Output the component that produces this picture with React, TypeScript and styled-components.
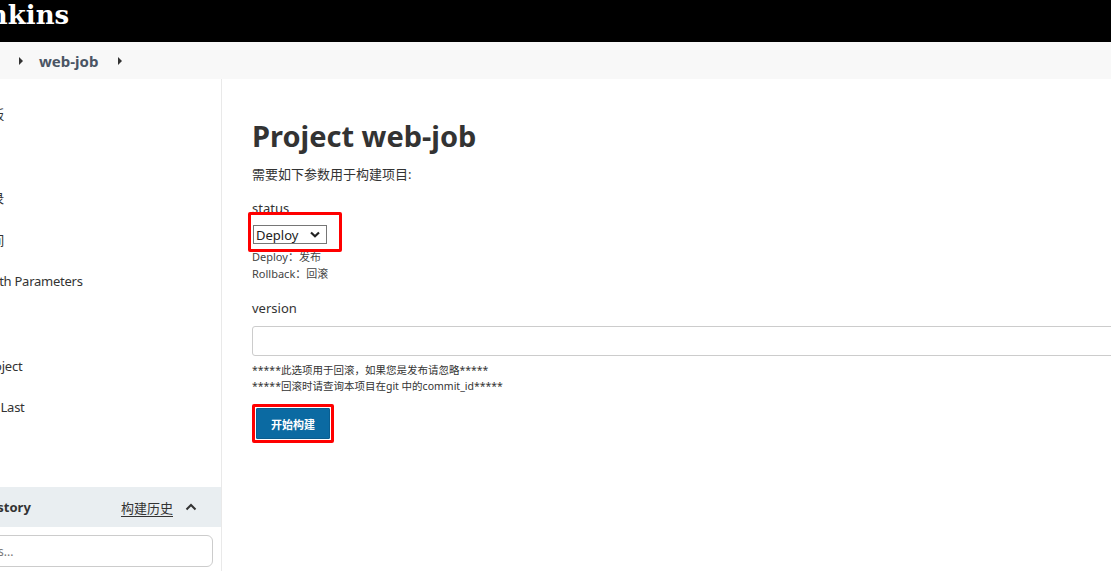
import React from "react";
import styled, { createGlobalStyle } from "styled-components";

const Global = createGlobalStyle`
  html, body { margin: 0; padding: 0; overflow: hidden; background: #fff; }
  body { font-family: "Noto Sans", "Noto Sans CJK SC", sans-serif; color: #333; }
  * { box-sizing: border-box; }
`;

const Viewport = styled.div`
  width: 1111px;
  height: 571px;
  overflow: hidden;
`;

const Page = styled.div`
  width: 1411px;
  margin-left: -100px;
  display: flex;
  flex-direction: column;
  height: 571px;
`;

const Header = styled.header`
  height: 42px;
  background: #000;
  display: flex;
  align-items: center;
  padding-left: 60px;
`;

const Logo = styled.span`
  font-family: "DejaVu Serif", "Liberation Serif", serif;
  font-weight: 700;
  font-size: 26px;
  color: #fff;
  line-height: 42px;
  margin-top: -13px;
`;

const Breadcrumbs = styled.nav`
  height: 37px;
  background: #f8f8f8;
  display: flex;
  align-items: center;
  padding-left: 18px;
`;

const Crumb = styled.a`
  font-size: 15px;
  font-weight: 700;
  color: #4a5564;
  text-decoration: none;
  margin-right: 16px;
`;

const Caret = styled.span`
  width: 12px;
  height: 12px;
  margin-right: 12px;
  display: flex;
  align-items: center;
  justify-content: center;
  &::before {
    content: "";
    border-top: 4px solid transparent;
    border-bottom: 4px solid transparent;
    border-left: 4px solid #333;
  }
`;

const Body = styled.div`
  flex: 1;
  display: flex;
  min-height: 0;
`;

const Sidebar = styled.aside`
  width: 322px;
  flex: none;
  border-right: 1px solid #e9e9e9;
  padding-top: 13px;
  display: flex;
  flex-direction: column;
`;

const TaskList = styled.ul`
  list-style: none;
  margin: 0;
  padding: 0;
`;

const Task = styled.li`
  height: 42px;
  display: flex;
  align-items: center;
  padding-left: 53px;
  font-size: 13px;
  letter-spacing: -0.25px;
  color: #333;
  white-space: nowrap;
`;

const HistoryPanel = styled.section`
  margin-top: 17px;
`;

const HistoryHeader = styled.div`
  height: 40px;
  background: #e9eef1;
  display: flex;
  align-items: center;
  justify-content: space-between;
  padding-left: 47px;
  padding-right: 24px;
`;

const HistoryTitle = styled.span`
  font-size: 13px;
  font-weight: 700;
  color: #333;
`;

const HistoryTools = styled.div`
  display: flex;
  align-items: center;
  gap: 12px;
`;

const HistoryLink = styled.a`
  font-size: 13px;
  color: #333;
  text-decoration: underline;
  text-underline-offset: 3px;
`;

const FilterBox = styled.div`
  padding: 8px 8px 0 20px;
`;

const FilterInput = styled.input`
  width: 100%;
  height: 32px;
  border: 1px solid #ccc;
  border-radius: 6px;
  padding: 0 17px;
  font-family: "Noto Sans", sans-serif;
  font-size: 12px;
  &::placeholder { color: #777; }
`;

const Main = styled.main`
  flex: 1;
  padding: 40px 0 0 30px;
  display: flex;
  flex-direction: column;
  align-items: flex-start;
`;

const Title = styled.h1`
  margin: 0;
  font-size: 29px;
  font-weight: 700;
  line-height: 34px;
  color: #333;
`;

const Intro = styled.p`
  margin: 11px 0 0;
  font-size: 13px;
  line-height: 20px;
`;

const Param = styled.div<{ $mt: number }>`
  margin-top: ${(p) => p.$mt}px;
  display: flex;
  flex-direction: column;
  align-items: flex-start;
  align-self: stretch;
`;

const Label = styled.div`
  font-size: 13px;
  line-height: 20px;
  color: #333;
`;

const Highlighted = styled.div<{ $mt: number }>`
  position: relative;
  margin-top: ${(p) => p.$mt}px;
  display: inline-flex;
`;

const RedBox = styled.span<{ $t: number; $r: number; $b: number; $l: number }>`
  position: absolute;
  top: ${(p) => p.$t}px;
  right: ${(p) => p.$r}px;
  bottom: ${(p) => p.$b}px;
  left: ${(p) => p.$l}px;
  border: 3px solid #ff0000;
  border-radius: 2px;
  pointer-events: none;
`;

const SelectBox = styled.div`
  width: 74px;
  height: 19px;
  margin-left: 1px;
  border: 1px solid #767676;
  display: flex;
  align-items: center;
  justify-content: space-between;
  padding: 0 6px 0 2px;
  font-size: 13px;
  color: #222;
  background: #fff;
`;

const Help = styled.div<{ $mt: number }>`
  margin-top: ${(p) => p.$mt}px;
  font-size: 11px;
  line-height: 17px;
  color: #444;
`;

const HelpSmall = styled.div<{ $mt: number }>`
  margin-top: ${(p) => p.$mt}px;
  font-size: 10.5px;
  line-height: 16px;
  color: #333;
`;

const TextInput = styled.input`
  margin-top: 8px;
  width: 100%;
  height: 30px;
  border: 1px solid #ccc;
  border-radius: 3px;
`;

const BuildButton = styled.button`
  width: 74px;
  height: 31px;
  margin-left: 4px;
  background: #0b6aa2;
  color: #fff;
  font-family: "Noto Sans CJK SC", sans-serif;
  font-weight: 700;
  font-size: 11px;
  border: 1px solid #0a5d8f;
  border-radius: 1px;
  padding: 0;
`;

const Chevron = () => (
  <svg width="10" height="7" viewBox="0 0 10 7">
    <path d="M1 1.5 L5 5.3 L9 1.5" fill="none" stroke="#222" strokeWidth="2.2" />
  </svg>
);

const ChevronUp = () => (
  <svg width="12" height="8" viewBox="0 0 12 8">
    <path d="M1.5 6.5 L6 2 L10.5 6.5" fill="none" stroke="#333" strokeWidth="2" />
  </svg>
);

const tasks = [
  "返回面板",
  "状态",
  "修改记录",
  "工作空间",
  "Build with Parameters",
  "配置",
  "删除 Project",
  "Rebuild Last",
  "重命名",
];

export default function App() {
  return (
    <>
      <Global />
      <Viewport>
        <Page>
          <Header>
            <Logo>Jenkins</Logo>
          </Header>
          <Breadcrumbs>
            <Crumb>Dashboard</Crumb>
            <Caret />
            <Crumb>web-job</Crumb>
            <Caret />
          </Breadcrumbs>
          <Body>
            <Sidebar>
              <TaskList>
                {tasks.map((t) => (
                  <Task key={t}>{t}</Task>
                ))}
              </TaskList>
              <HistoryPanel>
                <HistoryHeader>
                  <HistoryTitle>Build History</HistoryTitle>
                  <HistoryTools>
                    <HistoryLink>构建历史</HistoryLink>
                    <ChevronUp />
                  </HistoryTools>
                </HistoryHeader>
                <FilterBox>
                  <FilterInput placeholder="Filter builds..." />
                </FilterBox>
              </HistoryPanel>
            </Sidebar>
            <Main>
              <Title>Project web-job</Title>
              <Intro>需要如下参数用于构建项目:</Intro>
              <Param $mt={14}>
                <Label>status</Label>
                <Highlighted $mt={7}>
                  <SelectBox>
                    <span>Deploy</span>
                    <Chevron />
                  </SelectBox>
                  <RedBox $t={-13} $r={-15} $b={-8} $l={-4} />
                </Highlighted>
                <Help $mt={4}>Deploy：发布</Help>
                <Help $mt={0}>Rollback：回滚</Help>
              </Param>
              <Param $mt={16}>
                <Label>version</Label>
                <TextInput />
                <HelpSmall $mt={6}>*****此选项用于回滚，如果您是发布请忽略*****</HelpSmall>
                <HelpSmall $mt={0}>*****回滚时请查询本项目在git 中的commit_id*****</HelpSmall>
              </Param>
              <Highlighted $mt={14}>
                <BuildButton>开始构建</BuildButton>
                <RedBox $t={-4} $r={-4} $b={-4} $l={0} />
              </Highlighted>
            </Main>
          </Body>
        </Page>
      </Viewport>
    </>
  );
}
